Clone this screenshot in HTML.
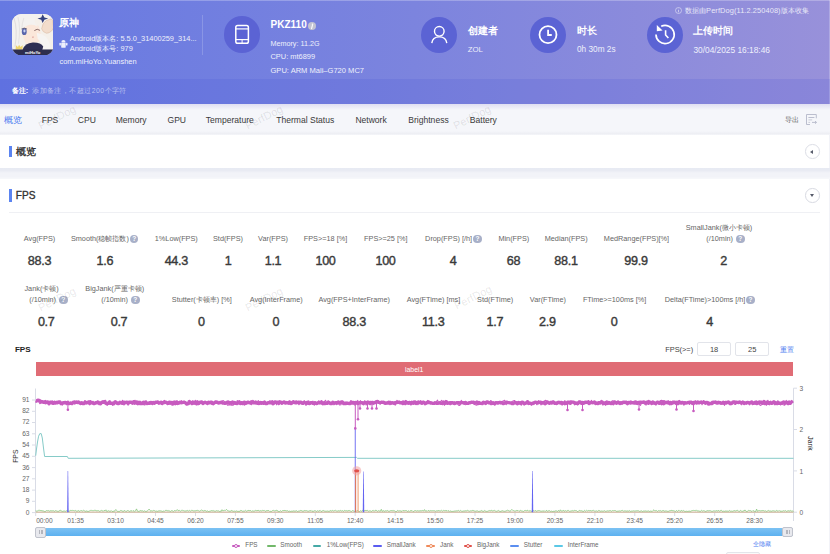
<!DOCTYPE html>
<html><head><meta charset="utf-8">
<style>
*{box-sizing:border-box;margin:0;padding:0}
html,body{width:830px;height:554px;overflow:hidden;background:#f2f3f8;font-family:"Liberation Sans",sans-serif;position:relative}
.abs{position:absolute}
#hdr{position:absolute;left:0;top:0;width:830px;height:104px;background:linear-gradient(90deg,#6679e2 0%,#7c84de 50%,#9891da 100%)}
#hdr .topline{position:absolute;left:0;top:0;width:830px;height:1px;background:rgba(255,255,255,0.25)}
#hdr .strip{position:absolute;left:0;top:78.5px;width:830px;height:25.5px;background:rgba(60,72,210,0.14)}
.w{color:#fff;position:absolute;white-space:nowrap}
.circ{position:absolute;width:36.2px;height:36.2px;border-radius:50%;background:#5b63d4}
.circ svg{position:absolute;left:0;top:0}
#tabs{position:absolute;left:0;top:104px;width:830px;height:30.7px;background:linear-gradient(180deg,#f5f6fa 0px,#f5f6fa 27px,#eeeff4 29.5px,#f3f4f8 30.7px)}
.tab{position:absolute;top:10.8px;font-size:8.55px;color:#3a3a3a;white-space:nowrap}
.tab.on{color:#4d7cf0}
.card{position:absolute;left:0;width:829px;background:#fff}
.bar{position:absolute;width:2.5px;background:#5b84f0}
.ml{position:absolute;width:160px;text-align:center;font-size:7.3px;color:#666;white-space:nowrap;line-height:9px}
.mv{position:absolute;width:100px;text-align:center;font-size:12.6px;color:#3a3a3a;-webkit-text-stroke:0.4px #3a3a3a;letter-spacing:-0.3px;white-space:nowrap;line-height:14px}
.q{display:inline-block;width:8.5px;height:8.5px;border-radius:50%;background:#a8b0c8;color:#fff;font-size:6.5px;line-height:8.5px;text-align:center;font-weight:bold;margin-left:1px;vertical-align:0px}
.ax{font-size:6.6px;fill:#666;font-family:"Liberation Sans",sans-serif}
.axt{font-size:6.8px;fill:#333;font-family:"Liberation Sans",sans-serif}
.axt2{font-size:6.8px;fill:#222;font-family:"Liberation Sans",sans-serif}
.lgi{position:absolute;top:544.5px;width:8.5px;height:2px;border-radius:1px}
.lgs{position:absolute;top:543.5px;width:4.2px;height:4.2px;border-radius:50%;border:1px solid;background:#fff;}
.lgt{position:absolute;top:541px;font-size:6.3px;color:#666;white-space:nowrap}
.wm{position:absolute;width:50px;height:12px;line-height:12px;text-align:center;font-size:11px;color:rgba(0,0,0,0.1);transform:rotate(-27deg);white-space:nowrap}
input{font-family:"Liberation Sans",sans-serif}
</style></head><body>
<div id="hdr">
  <div class="topline"></div>
  <div class="abs" style="left:829px;top:0;width:1px;height:104px;background:rgba(255,255,255,0.22)"></div>
  <div class="strip"></div>
  <!-- app icon -->
  <svg class="abs" style="left:11.6px;top:13.8px" width="41.5" height="41.5" viewBox="0 0 42 42">
    <defs><clipPath id="ic"><rect x="0" y="0" width="42" height="42" rx="9.5" ry="9.5"/></clipPath></defs>
    <g clip-path="url(#ic)">
      <rect width="42" height="42" fill="#f5f0ea"/>
      <path d="M0 0 H42 V6 Q30 2 20 4 Q10 8 8 18 Q7 28 9 36 H0Z" fill="#f3f1ef"/>
      <path d="M2 4 Q6 16 3 33" stroke="#d6d2d4" stroke-width="0.7" fill="none"/>
      <path d="M6 3 Q9 14 6.5 30" stroke="#dcd8d8" stroke-width="0.6" fill="none"/>
      <path d="M10 12 Q18 9 27 12 Q30 20 28.5 27 Q23 31 14 30 Q9.5 22 10 12Z" fill="#fbe7da"/>
      <path d="M9.5 13 Q14 3 24 4 Q21 8 26 13 Q20 9 15 12 Q12 13 9.5 17Z" fill="#f4f2f0"/>
      <path d="M12 4 Q10 10 10 15" stroke="#d8d4d4" stroke-width="0.5" fill="none"/>
      <ellipse cx="12.4" cy="17.9" rx="2.5" ry="3.4" fill="#5a66ac"/>
      <path d="M9.6 15.2 Q12.4 13.4 15.2 15.2" stroke="#3a3a5a" stroke-width="0.7" fill="none"/>
      <ellipse cx="12.6" cy="17.2" rx="1.1" ry="1.4" fill="#cdd5f2"/>
      <path d="M22.6 16.8 Q25.5 14.2 28.4 16.6" stroke="#6a4a4a" stroke-width="0.8" fill="none"/>
      <path d="M20.3 23.2 Q21.2 24.1 22.1 23.2" stroke="#c46a6a" stroke-width="0.6" fill="none"/>
      <path d="M30 15 Q30.5 9 35 6.5 L39.5 5 Q42 5.5 41.5 9 L42 14 Q40 19 35 19.5 Q31 18.5 30 15Z" fill="#f2dccb" stroke="#d6b49c" stroke-width="0.5"/>
      <path d="M31 0.2 L32.8 3.6 L36.6 4.6 L32.8 5.9 L31 9 L29.6 5.9 L25.8 4.6 L29.6 3.6 Z" fill="#34417e"/>
      <path d="M25 19 Q36 21 38.5 31 Q39 37 35 40 L29 40 Q33 31 26 25Z" fill="#f6f4f2"/>
      <path d="M10.8 36 Q13 29.5 21 28.8 Q29 28.5 31.6 33 L30.5 37 H10.8Z" fill="#2f2e52"/>
      <path d="M3.6 35.9 L4 31.5 L6 33.3 L7.2 31 L8.5 33.3 L10.8 31.5 L10.6 35.9Z" fill="#eed36a"/>
      <rect x="0" y="35.9" width="42" height="6.1" fill="#2d2d4e"/>
      <text x="21" y="40.6" text-anchor="middle" font-size="4.2" font-weight="bold" fill="#fff" font-family="Liberation Sans">miHoYo</text>
    </g>
  </svg>
  <div class="w" style="left:59.3px;top:15.5px;font-size:10.2px;font-weight:bold">原神</div>
  <svg class="abs" style="left:58.5px;top:38.5px" width="9" height="9" viewBox="0 0 9 9"><path d="M2.3 3.2 Q2.4 1 4.45 1 Q6.5 1 6.6 3.2 Z" fill="#eef0fc"/><rect x="2.2" y="3.5" width="4.5" height="5.3" rx="0.9" fill="#eef0fc"/><rect x="0.4" y="3.7" width="1.5" height="2.9" rx="0.7" fill="#eef0fc"/><rect x="7" y="3.7" width="1.5" height="2.9" rx="0.7" fill="#eef0fc"/></svg>
  <div class="w" style="left:69.8px;top:33.9px;font-size:7.42px;color:#eef0fb">Android版本名: 5.5.0_31400259_314...</div>
  <div class="w" style="left:69.8px;top:43.9px;font-size:7.42px;color:#eef0fb">Android版本号: 979</div>
  <div class="w" style="left:59.5px;top:56.5px;font-size:7.45px;color:#eef0fb">com.miHoYo.Yuanshen</div>
  <div class="abs" style="left:202px;top:14.5px;width:1px;height:40px;background:rgba(255,255,255,0.18)"></div>

  <div class="circ" style="left:223.8px;top:16.4px"><svg width="36.2" height="36.2" viewBox="0 0 36.2 36.2"><rect x="11.8" y="9.6" width="12.6" height="17.6" rx="1.8" fill="none" stroke="#fff" stroke-width="1.5"/><line x1="11.8" y1="12.9" x2="24.4" y2="12.9" stroke="#fff" stroke-width="1.2"/><line x1="11.8" y1="23.6" x2="24.4" y2="23.6" stroke="#fff" stroke-width="1.2"/><line x1="18.1" y1="23.6" x2="18.1" y2="27" stroke="#fff" stroke-width="1"/></svg></div>
  <div class="w" style="left:270.6px;top:19px;font-size:10px;font-weight:bold">PKZ110</div>
  <div class="abs" style="left:308.3px;top:21.6px;width:8.2px;height:8.2px;border-radius:50%;background:#c2c3d2"></div><svg class="abs" style="left:308.3px;top:21.6px" width="8.2" height="8.2" viewBox="0 0 8.2 8.2"><circle cx="4.5" cy="2.2" r="0.75" fill="#fff"/><path d="M4.4 3.4 L3.6 6.6" stroke="#fff" stroke-width="1.1" stroke-linecap="round"/></svg>
  <div class="w" style="left:270.5px;top:38.8px;font-size:7.2px;color:#eef0fb">Memory: 11.2G</div>
  <div class="w" style="left:270.5px;top:52.4px;font-size:7.45px;color:#eef0fb">CPU: mt6899</div>
  <div class="w" style="left:270.5px;top:66.3px;font-size:7.55px;color:#eef0fb">GPU: ARM Mali–G720 MC7</div>

  <div class="circ" style="left:421px;top:16.7px"><svg width="36.2" height="36.2" viewBox="0 0 36.2 36.2"><circle cx="18.3" cy="14.3" r="4.8" fill="none" stroke="#fff" stroke-width="1.4"/><path d="M10.8 26.2 Q11.5 19.9 18.3 19.9 Q25.1 19.9 25.8 26.2" fill="none" stroke="#fff" stroke-width="1.4"/></svg></div>
  <div class="w" style="left:467.7px;top:24px;font-size:10px;font-weight:bold">创建者</div>
  <div class="w" style="left:467.7px;top:45px;font-size:7.8px;color:#eef0fb">ZOL</div>

  <div class="circ" style="left:530.1px;top:16.7px"><svg width="36.2" height="36.2" viewBox="0 0 36.2 36.2"><circle cx="18" cy="17.7" r="8.5" fill="none" stroke="#fff" stroke-width="1.8"/><path d="M18.1 12.8 V18 H21.8" fill="none" stroke="#fff" stroke-width="1.8"/></svg></div>
  <div class="w" style="left:577px;top:24px;font-size:10px;font-weight:bold">时长</div>
  <div class="w" style="left:577px;top:44.6px;font-size:8.25px;color:#eef0fb">0h 30m 2s</div>

  <div class="circ" style="left:647px;top:16.7px"><svg width="36.2" height="36.2" viewBox="0 0 36.2 36.2"><path d="M9 17.5 A9.1 9.1 0 1 0 14.2 9.3" fill="none" stroke="#fff" stroke-width="1.7"/><path d="M9.8 8 L9.8 14.2 L15.6 13.6 Z" fill="#fff"/><path d="M18.6 13.2 V18 L21.4 21" fill="none" stroke="#fff" stroke-width="1.6"/></svg></div>
  <div class="w" style="left:693.4px;top:24px;font-size:10px;font-weight:bold">上传时间</div>
  <div class="w" style="left:693.4px;top:45px;font-size:8.35px;color:#eef0fb">30/04/2025 16:18:46</div>

  <svg class="abs" style="left:674.6px;top:7.2px" width="7" height="7" viewBox="0 0 7 7"><circle cx="3.5" cy="3.5" r="3" fill="none" stroke="#e4e4f6" stroke-width="0.6"/><line x1="3.5" y1="3" x2="3.5" y2="5.3" stroke="#e4e4f6" stroke-width="0.7"/><circle cx="3.5" cy="1.95" r="0.4" fill="#e4e4f6"/></svg>
  <div class="w" style="left:684.8px;top:5.8px;font-size:7.4px;letter-spacing:0.1px;color:#e8e8f8">数据由PerfDog(11.2.250408)版本收集</div>

  <div class="w" style="left:11.7px;top:86.2px;font-size:7.4px;font-weight:bold">备注:</div>
  <div class="w" style="left:32.1px;top:86.4px;font-size:6.9px;letter-spacing:0.45px;color:#b9c0ee">添加备注，不超过200个字符</div>
</div>

<div id="tabs">
<div class="tab on" style="left:4.3px">概览</div>
<div class="tab" style="left:41.7px">FPS</div>
<div class="tab" style="left:77.8px">CPU</div>
<div class="tab" style="left:115.7px">Memory</div>
<div class="tab" style="left:167.5px">GPU</div>
<div class="tab" style="left:205.8px">Temperature</div>
<div class="tab" style="left:276.3px">Thermal Status</div>
<div class="tab" style="left:355.4px">Network</div>
<div class="tab" style="left:408.3px">Brightness</div>
<div class="tab" style="left:469.8px">Battery</div>
  <div class="w" style="left:785.2px;top:11.2px;font-size:7px;color:#666">导出</div>
  <svg class="abs" style="left:805.5px;top:10px" width="12" height="12" viewBox="0 0 12 12"><path d="M10.3 4.3 V0.5 H0.5 V10.5 H4" fill="none" stroke="#b4b8c8" stroke-width="0.9"/><line x1="2.4" y1="3.5" x2="8.4" y2="3.5" stroke="#b4b8c8" stroke-width="0.9"/><line x1="2.4" y1="5.9" x2="6.2" y2="5.9" stroke="#c4c7d4" stroke-width="0.9"/><line x1="2.4" y1="8.4" x2="4.1" y2="8.4" stroke="#c4c7d4" stroke-width="0.9"/><path d="M6 8.4 H10.4 M9 7.1 L10.5 8.4 L9 9.7" fill="none" stroke="#b4b8c8" stroke-width="0.9"/></svg>
</div>
<div class="abs" style="left:0;top:104px;width:830px;height:6px;background:linear-gradient(180deg,rgba(110,100,200,0.16),rgba(110,100,200,0))"></div>

<div class="card" style="top:134.7px;height:33.3px">
  <div class="bar" style="left:9.3px;top:11px;height:11.8px"></div>
  <div class="abs" style="left:15.7px;top:10.3px;font-size:10.3px;color:#333;-webkit-text-stroke:0.35px #333">概览</div>
  <div class="abs" style="left:805px;top:9.7px;width:14.6px;height:14.6px;border-radius:50%;border:1px solid #dcdee6;background:#fff"></div>
  <div class="abs" style="left:810.4px;top:15px;width:0;height:0;border-top:2.2px solid transparent;border-bottom:2.2px solid transparent;border-right:3px solid #575b6a"></div>
</div>

<div class="abs" style="left:0;top:168px;width:830px;height:10.5px;background:linear-gradient(180deg,#e7eaf3 0px,#e9ebf3 2.5px,#f2f3f8 5px,#f2f3f8 8.5px,#f6f7fa 10.5px)"></div>
<div class="card" style="top:178.5px;height:376px">
  <div class="bar" style="left:9.3px;top:10.5px;height:12.5px"></div>
  <div class="abs" style="left:15.8px;top:11.9px;font-size:10.1px;color:#333;-webkit-text-stroke:0.35px #333">FPS</div>
  <div class="abs" style="left:805px;top:9.6px;width:14.6px;height:14.6px;border-radius:50%;border:1px solid #d8dae2;background:#fff"></div>
  <div class="abs" style="left:809.8px;top:15.3px;width:0;height:0;border-left:2.5px solid transparent;border-right:2.5px solid transparent;border-top:3.2px solid #575b6a"></div>
  <div class="abs" style="left:9.4px;top:33.2px;width:810.3px;height:1px;background:#eff0f4"></div>
</div>

<div class="ml" style="left:-40.5px;top:233.7px">Avg(FPS)</div>
<div class="mv" style="left:-10.5px;top:253.8px">88.3</div>
<div class="ml" style="left:24.7px;top:233.7px">Smooth(稳帧指数)<span class="q">?</span></div>
<div class="mv" style="left:54.8px;top:253.8px">1.6</div>
<div class="ml" style="left:96.3px;top:233.7px">1%Low(FPS)</div>
<div class="mv" style="left:126.3px;top:253.8px">44.3</div>
<div class="ml" style="left:148.0px;top:233.7px">Std(FPS)</div>
<div class="mv" style="left:178.0px;top:253.8px">1</div>
<div class="ml" style="left:193.0px;top:233.7px">Var(FPS)</div>
<div class="mv" style="left:223.0px;top:253.8px">1.1</div>
<div class="ml" style="left:245.5px;top:233.7px">FPS&gt;=18 [%]</div>
<div class="mv" style="left:275.5px;top:253.8px">100</div>
<div class="ml" style="left:305.8px;top:233.7px">FPS&gt;=25 [%]</div>
<div class="mv" style="left:335.5px;top:253.8px">100</div>
<div class="ml" style="left:373.4px;top:233.7px">Drop(FPS) [/h]<span class="q">?</span></div>
<div class="mv" style="left:403.1px;top:253.8px">4</div>
<div class="ml" style="left:433.8px;top:233.7px">Min(FPS)</div>
<div class="mv" style="left:463.5px;top:253.8px">68</div>
<div class="ml" style="left:486.2px;top:233.7px">Median(FPS)</div>
<div class="mv" style="left:516.0px;top:253.8px">88.1</div>
<div class="ml" style="left:556.5px;top:233.7px">MedRange(FPS)[%]</div>
<div class="mv" style="left:586.0px;top:253.8px">99.9</div>
<div class="ml" style="left:121.8px;top:294.5px">Stutter(卡顿率) [%]</div>
<div class="mv" style="left:151.4px;top:314.5px">0</div>
<div class="ml" style="left:196.2px;top:294.5px">Avg(InterFrame)</div>
<div class="mv" style="left:225.9px;top:314.5px">0</div>
<div class="ml" style="left:274.2px;top:294.5px">Avg(FPS+InterFrame)</div>
<div class="mv" style="left:304.2px;top:314.5px">88.3</div>
<div class="ml" style="left:353.5px;top:294.5px">Avg(FTime) [ms]</div>
<div class="mv" style="left:383.2px;top:314.5px">11.3</div>
<div class="ml" style="left:415.2px;top:294.5px">Std(FTime)</div>
<div class="mv" style="left:444.8px;top:314.5px">1.7</div>
<div class="ml" style="left:467.9px;top:294.5px">Var(FTime)</div>
<div class="mv" style="left:497.4px;top:314.5px">2.9</div>
<div class="ml" style="left:534.6px;top:294.5px">FTime&gt;=100ms [%]</div>
<div class="mv" style="left:564.2px;top:314.5px">0</div>
<div class="ml" style="left:629.8px;top:294.5px">Delta(FTime)&gt;100ms [/h]<span class="q">?</span></div>
<div class="mv" style="left:659.5px;top:314.5px">4</div>
<div class="ml" style="left:639.0px;top:223.4px">SmallJank(微小卡顿)</div>
<div class="ml" style="left:645.4px;top:233.9px">(/10min)&nbsp;<span class="q">?</span></div>
<div class="mv" style="left:673.6px;top:253.8px">2</div>
<div class="ml" style="left:-38.4px;top:284px">Jank(卡顿)</div>
<div class="ml" style="left:-31.6px;top:294.5px">(/10min)&nbsp;<span class="q">?</span></div>
<div class="mv" style="left:-3.8px;top:314.5px">0.7</div>
<div class="ml" style="left:34.7px;top:284px">BigJank(严重卡顿)</div>
<div class="ml" style="left:40.4px;top:294.5px">(/10min)&nbsp;<span class="q">?</span></div>
<div class="mv" style="left:69.0px;top:314.5px">0.7</div>

<div class="abs" style="left:14.9px;top:345px;font-size:8.1px;font-weight:bold;color:#222">FPS</div>
<div class="abs" style="left:665.2px;top:344.6px;font-size:7.4px;color:#444">FPS(&gt;=)</div>
<div class="abs" style="left:697.3px;top:342.2px;width:33.6px;height:13.4px;border:1px solid #e2e4ea;border-radius:2px;background:#fff;font-size:7.5px;color:#444;text-align:center;line-height:13.4px">18</div>
<div class="abs" style="left:735.2px;top:342.2px;width:34.1px;height:13.4px;border:1px solid #e2e4ea;border-radius:2px;background:#fff;font-size:7.5px;color:#444;text-align:center;line-height:13.4px">25</div>
<div class="abs" style="left:779.7px;top:344.8px;font-size:7.2px;color:#4d7cf0">重置</div>

<div class="abs" style="left:35.7px;top:362px;width:757.8px;height:14.3px;background:#e06c75"></div>
<div class="abs" style="left:405px;top:365.7px;font-size:6.9px;color:#fff">label1</div>

<svg class="abs" style="left:0;top:0" width="830" height="554" viewBox="0 0 830 554">
<line x1="35.5" y1="388.5" x2="35.5" y2="512.5" stroke="#d9dce6" stroke-width="1"/>
<line x1="793.5" y1="388.2" x2="793.5" y2="521" stroke="#d9dce6" stroke-width="1"/>
<line x1="35.5" y1="512.5" x2="793.5" y2="512.5" stroke="#d9dce6" stroke-width="1"/>
<line x1="32" y1="512.6" x2="35.5" y2="512.6" stroke="#d9dce6" stroke-width="1"/>
<text x="29.5" y="514.5" text-anchor="end" class="ax">0</text>
<line x1="32" y1="501.3" x2="35.5" y2="501.3" stroke="#d9dce6" stroke-width="1"/>
<text x="29.5" y="503.2" text-anchor="end" class="ax">9</text>
<line x1="32" y1="490.1" x2="35.5" y2="490.1" stroke="#d9dce6" stroke-width="1"/>
<text x="29.5" y="492.0" text-anchor="end" class="ax">18</text>
<line x1="32" y1="478.8" x2="35.5" y2="478.8" stroke="#d9dce6" stroke-width="1"/>
<text x="29.5" y="480.7" text-anchor="end" class="ax">27</text>
<line x1="32" y1="467.6" x2="35.5" y2="467.6" stroke="#d9dce6" stroke-width="1"/>
<text x="29.5" y="469.5" text-anchor="end" class="ax">36</text>
<line x1="32" y1="456.3" x2="35.5" y2="456.3" stroke="#d9dce6" stroke-width="1"/>
<text x="29.5" y="458.2" text-anchor="end" class="ax">45</text>
<line x1="32" y1="445.0" x2="35.5" y2="445.0" stroke="#d9dce6" stroke-width="1"/>
<text x="29.5" y="446.9" text-anchor="end" class="ax">54</text>
<line x1="32" y1="433.8" x2="35.5" y2="433.8" stroke="#d9dce6" stroke-width="1"/>
<text x="29.5" y="435.7" text-anchor="end" class="ax">63</text>
<line x1="32" y1="422.5" x2="35.5" y2="422.5" stroke="#d9dce6" stroke-width="1"/>
<text x="29.5" y="424.4" text-anchor="end" class="ax">72</text>
<line x1="32" y1="411.3" x2="35.5" y2="411.3" stroke="#d9dce6" stroke-width="1"/>
<text x="29.5" y="413.2" text-anchor="end" class="ax">82</text>
<line x1="32" y1="400.0" x2="35.5" y2="400.0" stroke="#d9dce6" stroke-width="1"/>
<text x="29.5" y="401.9" text-anchor="end" class="ax">91</text>
<line x1="793.5" y1="512.2" x2="797" y2="512.2" stroke="#d9dce6" stroke-width="1"/>
<text x="799.5" y="514.8" class="ax">0</text>
<line x1="793.5" y1="470.9" x2="797" y2="470.9" stroke="#d9dce6" stroke-width="1"/>
<text x="799.5" y="473.5" class="ax">1</text>
<line x1="793.5" y1="429.5" x2="797" y2="429.5" stroke="#d9dce6" stroke-width="1"/>
<text x="799.5" y="432.1" class="ax">2</text>
<line x1="793.5" y1="388.2" x2="797" y2="388.2" stroke="#d9dce6" stroke-width="1"/>
<text x="799.5" y="390.8" class="ax">3</text>
<line x1="35.7" y1="512.5" x2="35.7" y2="516" stroke="#d9dce6" stroke-width="1"/>
<text x="36.2" y="523.1" class="ax">00:00</text>
<line x1="75.6" y1="512.5" x2="75.6" y2="516" stroke="#d9dce6" stroke-width="1"/>
<text x="75.6" y="523.1" text-anchor="middle" class="ax">01:35</text>
<line x1="115.6" y1="512.5" x2="115.6" y2="516" stroke="#d9dce6" stroke-width="1"/>
<text x="115.6" y="523.1" text-anchor="middle" class="ax">03:10</text>
<line x1="155.5" y1="512.5" x2="155.5" y2="516" stroke="#d9dce6" stroke-width="1"/>
<text x="155.5" y="523.1" text-anchor="middle" class="ax">04:45</text>
<line x1="195.5" y1="512.5" x2="195.5" y2="516" stroke="#d9dce6" stroke-width="1"/>
<text x="195.5" y="523.1" text-anchor="middle" class="ax">06:20</text>
<line x1="235.4" y1="512.5" x2="235.4" y2="516" stroke="#d9dce6" stroke-width="1"/>
<text x="235.4" y="523.1" text-anchor="middle" class="ax">07:55</text>
<line x1="275.3" y1="512.5" x2="275.3" y2="516" stroke="#d9dce6" stroke-width="1"/>
<text x="275.3" y="523.1" text-anchor="middle" class="ax">09:30</text>
<line x1="315.3" y1="512.5" x2="315.3" y2="516" stroke="#d9dce6" stroke-width="1"/>
<text x="315.3" y="523.1" text-anchor="middle" class="ax">11:05</text>
<line x1="355.2" y1="512.5" x2="355.2" y2="516" stroke="#d9dce6" stroke-width="1"/>
<text x="355.2" y="523.1" text-anchor="middle" class="ax">12:40</text>
<line x1="395.2" y1="512.5" x2="395.2" y2="516" stroke="#d9dce6" stroke-width="1"/>
<text x="395.2" y="523.1" text-anchor="middle" class="ax">14:15</text>
<line x1="435.1" y1="512.5" x2="435.1" y2="516" stroke="#d9dce6" stroke-width="1"/>
<text x="435.1" y="523.1" text-anchor="middle" class="ax">15:50</text>
<line x1="475.0" y1="512.5" x2="475.0" y2="516" stroke="#d9dce6" stroke-width="1"/>
<text x="475.0" y="523.1" text-anchor="middle" class="ax">17:25</text>
<line x1="515.0" y1="512.5" x2="515.0" y2="516" stroke="#d9dce6" stroke-width="1"/>
<text x="515.0" y="523.1" text-anchor="middle" class="ax">19:00</text>
<line x1="554.9" y1="512.5" x2="554.9" y2="516" stroke="#d9dce6" stroke-width="1"/>
<text x="554.9" y="523.1" text-anchor="middle" class="ax">20:35</text>
<line x1="594.9" y1="512.5" x2="594.9" y2="516" stroke="#d9dce6" stroke-width="1"/>
<text x="594.9" y="523.1" text-anchor="middle" class="ax">22:10</text>
<line x1="634.8" y1="512.5" x2="634.8" y2="516" stroke="#d9dce6" stroke-width="1"/>
<text x="634.8" y="523.1" text-anchor="middle" class="ax">23:45</text>
<line x1="674.7" y1="512.5" x2="674.7" y2="516" stroke="#d9dce6" stroke-width="1"/>
<text x="674.7" y="523.1" text-anchor="middle" class="ax">25:20</text>
<line x1="714.7" y1="512.5" x2="714.7" y2="516" stroke="#d9dce6" stroke-width="1"/>
<text x="714.7" y="523.1" text-anchor="middle" class="ax">26:55</text>
<line x1="754.6" y1="512.5" x2="754.6" y2="516" stroke="#d9dce6" stroke-width="1"/>
<text x="754.6" y="523.1" text-anchor="middle" class="ax">28:30</text>
<text transform="translate(17.6,456.2) rotate(-90)" text-anchor="middle" class="axt">FPS</text>
<text transform="translate(808,443.5) rotate(90)" text-anchor="middle" class="axt2">Jank</text>
<line x1="35.7" y1="512.1" x2="793.5" y2="512.1" stroke="#d8bea2" stroke-width="1.1"/>
<polyline points="35.7,510.7 36.6,511.1 37.5,510.9 38.4,510.4 39.3,510.3 40.2,510.4 41.1,510.8 42.0,510.4 42.9,511.1 43.8,511.0 44.7,511.5 45.6,511.3 46.5,510.5 47.4,510.7 48.3,510.5 49.2,511.1 50.1,511.0 51.0,510.4 51.9,511.1 52.8,510.7 53.7,510.8 54.6,511.3 55.5,510.6 56.4,510.9 57.3,511.2 58.2,511.5 59.1,510.8 60.0,510.5 60.9,510.3 61.8,511.2 62.7,511.4 63.6,511.1 64.5,511.0 65.4,511.3 66.3,510.9 67.2,510.4 68.1,511.1 69.0,511.3 69.9,510.8 70.8,510.3 71.7,510.5 72.6,510.4 73.5,510.5 74.4,510.8 75.3,510.4 76.2,511.0 77.1,511.3 78.0,510.6 78.9,510.7 79.8,511.4 80.7,510.5 81.6,510.6 82.5,511.0 83.4,510.3 84.3,510.7 85.2,511.4 86.1,510.9 87.0,511.1 87.9,511.4 88.8,511.3 89.7,510.8 90.6,510.4 91.5,510.4 92.4,510.6 93.3,510.7 94.2,510.3 95.1,510.4 96.0,510.3 96.9,511.0 97.8,510.6 98.7,510.7 99.6,511.3 100.5,510.9 101.4,510.4 102.3,510.7 103.2,511.3 104.1,510.3 105.0,510.9 105.9,509.8 106.8,511.5 107.7,511.1 108.6,510.7 109.5,511.2 110.4,511.2 111.3,510.6 112.2,511.5 113.1,511.3 114.0,511.2 114.9,510.9 115.8,509.5 116.7,510.6 117.6,511.4 118.5,511.4 119.4,511.4 120.3,510.6 121.2,510.5 122.1,511.0 123.0,511.3 123.9,511.1 124.8,510.4 125.7,511.4 126.6,511.2 127.5,510.5 128.4,510.7 129.3,511.5 130.2,510.8 131.1,511.2 132.0,510.5 132.9,511.4 133.8,510.5 134.7,511.5 135.6,510.7 136.5,508.9 137.4,511.1 138.3,511.4 139.2,511.3 140.1,510.6 141.0,510.7 141.9,511.0 142.8,510.8 143.7,511.4 144.6,510.8 145.5,511.4 146.4,511.4 147.3,510.9 148.2,510.3 149.1,509.1 150.0,510.5 150.9,511.2 151.8,510.7 152.7,511.0 153.6,510.4 154.5,510.6 155.4,511.2 156.3,511.0 157.2,511.4 158.1,511.0 159.0,510.9 159.9,510.8 160.8,510.9 161.7,511.1 162.6,511.4 163.5,511.0 164.4,511.3 165.3,510.4 166.2,510.4 167.1,510.4 168.0,511.2 168.9,510.5 169.8,511.1 170.7,511.4 171.6,510.6 172.5,510.8 173.4,511.5 174.3,510.5 175.2,510.9 176.1,510.5 177.0,510.0 177.9,509.9 178.8,511.0 179.7,510.4 180.6,511.2 181.5,510.4 182.4,510.3 183.3,510.6 184.2,510.8 185.1,511.3 186.0,510.5 186.9,511.0 187.8,510.4 188.7,511.1 189.6,510.4 190.5,511.1 191.4,510.4 192.3,510.4 193.2,510.8 194.1,511.0 195.0,510.6 195.9,510.9 196.8,510.4 197.7,510.4 198.6,510.7 199.5,511.2 200.4,510.9 201.3,509.9 202.2,510.3 203.1,511.0 204.0,510.9 204.9,510.4 205.8,510.8 206.7,511.3 207.6,510.9 208.5,511.5 209.4,511.3 210.3,511.1 211.2,510.7 212.1,510.5 213.0,511.2 213.9,510.5 214.8,511.3 215.7,511.1 216.6,510.6 217.5,510.9 218.4,510.8 219.3,511.5 220.2,511.0 221.1,511.5 222.0,509.7 222.9,510.9 223.8,510.5 224.7,510.3 225.6,510.4 226.5,509.4 227.4,510.6 228.3,510.9 229.2,511.1 230.1,511.4 231.0,510.7 231.9,510.5 232.8,511.1 233.7,511.3 234.6,511.1 235.5,511.3 236.4,510.9 237.3,511.3 238.2,511.3 239.1,511.4 240.0,511.1 240.9,510.3 241.8,510.7 242.7,511.3 243.6,511.1 244.5,511.1 245.4,510.3 246.3,511.2 247.2,510.9 248.1,510.4 249.0,510.6 249.9,510.6 250.8,510.5 251.7,511.5 252.6,510.8 253.5,511.1 254.4,511.0 255.3,510.4 256.2,510.6 257.1,510.7 258.0,510.3 258.9,510.6 259.8,511.1 260.7,510.6 261.6,510.9 262.5,510.4 263.4,510.5 264.3,510.4 265.2,511.3 266.1,510.8 267.0,510.6 267.9,510.6 268.8,510.5 269.7,511.4 270.6,511.3 271.5,511.4 272.4,510.6 273.3,510.3 274.2,510.9 275.1,510.7 276.0,510.7 276.9,510.0 277.8,511.3 278.7,511.4 279.6,511.4 280.5,510.7 281.4,511.5 282.3,510.7 283.2,510.6 284.1,510.4 285.0,510.6 285.9,510.6 286.8,510.9 287.7,510.7 288.6,511.4 289.5,511.1 290.4,511.4 291.3,511.2 292.2,511.2 293.1,511.2 294.0,510.6 294.9,511.4 295.8,510.9 296.7,510.7 297.6,511.5 298.5,511.1 299.4,511.0 300.3,510.5 301.2,510.5 302.1,510.9 303.0,511.4 303.9,510.8 304.8,510.5 305.7,510.7 306.6,510.6 307.5,511.0 308.4,511.2 309.3,510.8 310.2,510.8 311.1,510.4 312.0,511.5 312.9,510.9 313.8,511.3 314.7,510.6 315.6,510.8 316.5,511.4 317.4,510.7 318.3,511.2 319.2,510.9 320.1,510.3 321.0,511.4 321.9,511.3 322.8,510.6 323.7,510.5 324.6,511.1 325.5,511.2 326.4,511.2 327.3,511.0 328.2,511.2 329.1,511.4 330.0,510.7 330.9,510.6 331.8,511.1 332.7,510.4 333.6,511.0 334.5,510.6 335.4,510.3 336.3,510.9 337.2,511.1 338.1,510.9 339.0,510.6 339.9,511.1 340.8,510.3 341.7,511.1 342.6,510.6 343.5,511.4 344.4,510.3 345.3,510.8 346.2,510.5 347.1,511.2 348.0,510.5 348.9,510.7 349.8,510.6 350.7,511.2 351.6,511.4 352.5,510.5 353.4,510.8 354.3,511.4 355.2,510.8 356.1,511.5 357.0,510.4 357.9,510.8 358.8,511.4 359.7,511.5 360.6,510.7 361.5,511.4 362.4,510.3 363.3,510.8 364.2,510.7 365.1,510.3 366.0,510.7 366.9,510.4 367.8,510.5 368.7,511.3 369.6,510.8 370.5,510.9 371.4,511.4 372.3,510.7 373.2,510.3 374.1,511.3 375.0,510.3 375.9,510.4 376.8,510.6 377.7,511.4 378.6,510.6 379.5,511.0 380.4,511.2 381.3,509.3 382.2,511.4 383.1,510.6 384.0,510.9 384.9,511.4 385.8,510.6 386.7,510.9 387.6,510.5 388.5,511.2 389.4,511.2 390.3,510.7 391.2,510.7 392.1,510.4 393.0,511.2 393.9,510.4 394.8,511.0 395.7,511.5 396.6,511.5 397.5,510.4 398.4,510.9 399.3,510.8 400.2,510.8 401.1,511.1 402.0,511.3 402.9,510.4 403.8,510.7 404.7,510.7 405.6,510.5 406.5,510.6 407.4,511.4 408.3,510.7 409.2,511.5 410.1,510.6 411.0,511.1 411.9,510.4 412.8,511.3 413.7,511.4 414.6,510.7 415.5,510.5 416.4,511.0 417.3,510.7 418.2,510.8 419.1,511.2 420.0,510.4 420.9,511.0 421.8,510.7 422.7,510.5 423.6,511.0 424.5,509.6 425.4,511.1 426.3,510.7 427.2,511.3 428.1,510.4 429.0,510.8 429.9,511.1 430.8,510.5 431.7,510.8 432.6,510.7 433.5,510.7 434.4,510.7 435.3,511.3 436.2,510.7 437.1,511.2 438.0,510.3 438.9,510.8 439.8,510.8 440.7,510.9 441.6,510.3 442.5,511.1 443.4,510.4 444.3,510.7 445.2,510.5 446.1,510.9 447.0,510.4 447.9,511.3 448.8,510.5 449.7,511.4 450.6,510.9 451.5,511.4 452.4,511.4 453.3,511.3 454.2,511.2 455.1,510.8 456.0,511.3 456.9,510.6 457.8,510.9 458.7,510.4 459.6,511.2 460.5,510.3 461.4,511.2 462.3,511.3 463.2,511.0 464.1,511.1 465.0,510.8 465.9,510.8 466.8,510.8 467.7,510.3 468.6,510.9 469.5,511.2 470.4,510.8 471.3,510.9 472.2,510.5 473.1,510.4 474.0,510.9 474.9,511.1 475.8,511.2 476.7,510.9 477.6,510.9 478.5,511.4 479.4,511.3 480.3,511.2 481.2,510.5 482.1,510.9 483.0,511.4 483.9,511.2 484.8,510.4 485.7,511.2 486.6,511.4 487.5,511.3 488.4,510.9 489.3,510.5 490.2,510.9 491.1,510.3 492.0,510.5 492.9,511.1 493.8,510.5 494.7,510.4 495.6,511.1 496.5,511.3 497.4,511.0 498.3,510.4 499.2,511.1 500.1,511.3 501.0,511.5 501.9,510.7 502.8,510.8 503.7,511.2 504.6,511.3 505.5,511.1 506.4,511.0 507.3,510.0 508.2,510.5 509.1,510.8 510.0,511.4 510.9,510.6 511.8,509.4 512.7,510.4 513.6,510.6 514.5,511.0 515.4,511.0 516.3,510.5 517.2,510.6 518.1,510.4 519.0,511.3 519.9,510.8 520.8,510.3 521.7,511.0 522.6,511.1 523.5,511.4 524.4,510.6 525.3,510.4 526.2,510.8 527.1,510.4 528.0,510.3 528.9,511.4 529.8,510.5 530.7,510.9 531.6,511.3 532.5,510.7 533.4,510.4 534.3,511.2 535.2,510.3 536.1,511.2 537.0,511.2 537.9,510.6 538.8,510.6 539.7,510.7 540.6,511.1 541.5,511.2 542.4,511.0 543.3,511.2 544.2,510.6 545.1,511.5 546.0,510.5 546.9,510.6 547.8,511.4 548.7,510.7 549.6,510.7 550.5,511.4 551.4,511.1 552.3,511.5 553.2,511.3 554.1,511.3 555.0,511.2 555.9,510.7 556.8,511.0 557.7,511.4 558.6,510.3 559.5,511.4 560.4,509.8 561.3,511.1 562.2,511.1 563.1,510.4 564.0,510.7 564.9,511.3 565.8,510.4 566.7,511.4 567.6,510.4 568.5,510.4 569.4,511.3 570.3,511.1 571.2,511.1 572.1,510.4 573.0,511.2 573.9,510.7 574.8,510.3 575.7,510.6 576.6,510.7 577.5,511.5 578.4,511.3 579.3,510.3 580.2,510.8 581.1,510.7 582.0,510.9 582.9,511.3 583.8,511.3 584.7,510.3 585.6,511.2 586.5,510.3 587.4,510.9 588.3,510.5 589.2,510.7 590.1,510.6 591.0,510.6 591.9,511.1 592.8,510.4 593.7,510.4 594.6,511.1 595.5,511.1 596.4,510.8 597.3,511.4 598.2,510.6 599.1,510.6 600.0,510.9 600.9,511.4 601.8,510.9 602.7,511.2 603.6,511.1 604.5,510.7 605.4,511.3 606.3,511.2 607.2,510.8 608.1,511.0 609.0,510.9 609.9,510.6 610.8,510.7 611.7,511.3 612.6,510.5 613.5,510.7 614.4,510.5 615.3,510.5 616.2,511.2 617.1,511.5 618.0,510.8 618.9,511.3 619.8,510.8 620.7,511.1 621.6,510.5 622.5,510.3 623.4,511.2 624.3,510.9 625.2,510.9 626.1,511.0 627.0,511.2 627.9,510.8 628.8,511.2 629.7,510.6 630.6,511.4 631.5,511.1 632.4,511.1 633.3,510.8 634.2,511.1 635.1,510.8 636.0,511.2 636.9,510.6 637.8,510.8 638.7,510.8 639.6,511.4 640.5,511.1 641.4,510.8 642.3,511.5 643.2,511.0 644.1,511.2 645.0,510.9 645.9,511.0 646.8,511.2 647.7,511.1 648.6,510.9 649.5,511.4 650.4,511.1 651.3,511.2 652.2,511.5 653.1,510.4 654.0,509.8 654.9,510.8 655.8,510.7 656.7,510.6 657.6,511.4 658.5,510.6 659.4,510.8 660.3,510.5 661.2,511.3 662.1,510.9 663.0,510.6 663.9,510.7 664.8,511.3 665.7,510.9 666.6,511.0 667.5,511.3 668.4,511.3 669.3,510.8 670.2,510.8 671.1,510.3 672.0,510.6 672.9,510.7 673.8,510.8 674.7,511.1 675.6,511.4 676.5,510.4 677.4,511.4 678.3,510.5 679.2,510.4 680.1,511.4 681.0,510.6 681.9,510.5 682.8,511.2 683.7,510.5 684.6,511.3 685.5,511.4 686.4,511.2 687.3,511.4 688.2,511.3 689.1,511.1 690.0,511.2 690.9,511.4 691.8,510.6 692.7,510.5 693.6,510.4 694.5,510.5 695.4,510.9 696.3,509.9 697.2,510.9 698.1,511.1 699.0,510.7 699.9,511.5 700.8,511.1 701.7,510.3 702.6,511.1 703.5,510.7 704.4,510.9 705.3,511.4 706.2,511.2 707.1,510.7 708.0,510.7 708.9,510.9 709.8,510.6 710.7,510.8 711.6,511.3 712.5,511.3 713.4,510.9 714.3,510.9 715.2,511.1 716.1,510.7 717.0,510.7 717.9,511.1 718.8,510.3 719.7,511.4 720.6,510.4 721.5,510.3 722.4,511.4 723.3,511.1 724.2,511.4 725.1,511.0 726.0,511.1 726.9,511.1 727.8,511.1 728.7,511.2 729.6,510.5 730.5,511.2 731.4,511.1 732.3,511.3 733.2,511.0 734.1,510.7 735.0,510.7 735.9,511.1 736.8,510.4 737.7,510.3 738.6,511.3 739.5,511.4 740.4,510.3 741.3,511.0 742.2,511.5 743.1,510.8 744.0,511.1 744.9,509.9 745.8,511.1 746.7,511.5 747.6,511.3 748.5,510.3 749.4,510.6 750.3,510.5 751.2,511.2 752.1,511.3 753.0,510.4 753.9,511.2 754.8,511.4 755.7,511.5 756.6,509.1 757.5,511.3 758.4,510.7 759.3,510.5 760.2,510.9 761.1,510.7 762.0,510.8 762.9,510.5 763.8,510.7 764.7,511.1 765.6,510.8 766.5,511.4 767.4,511.0 768.3,510.4 769.2,511.1 770.1,510.7 771.0,511.5 771.9,511.0 772.8,510.8 773.7,510.8 774.6,511.0 775.5,511.3 776.4,510.3 777.3,510.8 778.2,511.3 779.1,510.4 780.0,511.3 780.9,511.0 781.8,511.3 782.7,511.1 783.6,510.7 784.5,511.0 785.4,510.5 786.3,511.4 787.2,511.0 788.1,510.9 789.0,510.6 789.9,511.2 790.8,510.4 791.7,511.2 792.6,511.0 793.5,511.4" fill="none" stroke="#86c77c" stroke-width="0.8"/>
<polyline points="35.7,455.7 36.5,449.0 37.5,442.0 38.6,436.2 39.8,433.6 41.2,433.6 42.3,438.0 43.5,448.0 44.6,456.5 67.4,456.5 68.2,458.3 356.5,457.4 357.5,458.3 793.5,458.3" fill="none" stroke="#86cbc8" stroke-width="1"/>
<polygon points="67.15,512.2 67.65,470.9 68.15,470.9 68.65,512.2" fill="#6464f2"/>
<polygon points="362.75,512.2 363.25,471.4 363.75,471.4 364.25,512.2" fill="#6464f2"/>
<polygon points="531.75,512.2 532.25,470.9 532.75,470.9 533.25,512.2" fill="#6464f2"/>
<line x1="355.25" y1="428" x2="355.25" y2="512.2" stroke="#6464f2" stroke-width="0.9"/>
<line x1="355.6" y1="471" x2="355.6" y2="512.2" stroke="#e0785c" stroke-width="1.1"/>
<line x1="358.1" y1="471" x2="358.1" y2="512.2" stroke="#f2a47a" stroke-width="1.1"/>
<polyline points="35.7,400.8 36.8,401.0 37.9,400.2 39.0,400.5 40.1,400.8 41.2,402.0 42.3,401.6 43.4,402.3 44.5,402.2 45.6,402.7 46.7,402.2 47.8,402.0 48.9,403.7 50.0,402.6 51.1,402.1 52.2,403.0 53.3,403.3 54.4,402.2 55.5,403.0 56.6,402.5 57.7,402.8 58.8,401.9 59.9,402.0 61.0,403.7 62.1,403.5 63.2,402.8 64.3,402.9 65.4,402.4 66.5,403.3 67.6,402.7 68.7,403.6 69.8,403.3 70.9,403.4 72.0,403.6 73.1,402.4 74.2,402.0 75.3,402.3 76.4,402.2 77.5,402.1 78.6,402.0 79.7,402.9 80.8,403.5 81.9,402.7 83.0,403.6 84.1,403.5 85.2,402.0 86.3,403.0 87.4,402.6 88.5,402.1 89.6,403.6 90.7,402.4 91.8,402.9 92.9,403.1 94.0,403.6 95.1,403.1 96.2,402.6 97.3,402.7 98.4,402.2 99.5,403.6 100.6,403.7 101.7,402.3 102.8,402.0 103.9,402.4 105.0,402.5 106.1,403.5 107.2,403.5 108.3,403.4 109.4,402.0 110.5,403.3 111.6,403.2 112.7,403.1 113.8,403.7 114.9,402.0 116.0,402.2 117.1,403.3 118.2,403.6 119.3,403.1 120.4,402.4 121.5,403.0 122.6,403.3 123.7,402.1 124.8,402.5 125.9,402.4 127.0,402.1 128.1,402.8 129.2,402.2 130.3,402.3 131.4,402.2 132.5,403.1 133.6,401.9 134.7,403.2 135.8,402.3 136.9,402.0 138.0,403.6 139.1,402.3 140.2,403.6 141.3,403.5 142.4,403.5 143.5,402.2 144.6,402.7 145.7,402.1 146.8,403.6 147.9,403.4 149.0,403.0 150.1,402.7 151.2,402.5 152.3,403.4 153.4,402.8 154.5,403.0 155.6,402.2 156.7,402.3 157.8,402.0 158.9,403.2 160.0,402.9 161.1,402.2 162.2,403.5 163.3,402.4 164.4,402.6 165.5,402.2 166.6,402.4 167.7,403.4 168.8,402.5 169.9,402.2 171.0,402.8 172.1,402.5 173.2,403.5 174.3,402.1 175.4,403.7 176.5,402.0 177.6,403.5 178.7,403.1 179.8,402.3 180.9,402.8 182.0,402.4 183.1,402.4 184.2,402.3 185.3,402.6 186.4,403.7 187.5,403.7 188.6,403.6 189.7,402.1 190.8,402.4 191.9,403.5 193.0,402.0 194.1,403.2 195.2,402.4 196.3,403.7 197.4,401.9 198.5,403.4 199.6,402.5 200.7,402.2 201.8,401.9 202.9,403.4 204.0,402.8 205.1,402.2 206.2,402.7 207.3,403.5 208.4,402.3 209.5,402.9 210.6,402.1 211.7,402.2 212.8,403.3 213.9,403.2 215.0,402.3 216.1,402.0 217.2,402.1 218.3,403.0 219.4,402.8 220.5,402.4 221.6,402.3 222.7,403.0 223.8,403.2 224.9,403.4 226.0,402.9 227.1,402.3 228.2,402.0 229.3,403.2 230.4,402.6 231.5,403.2 232.6,402.0 233.7,403.4 234.8,402.5 235.9,403.4 237.0,403.5 238.1,402.8 239.2,401.9 240.3,403.5 241.4,402.8 242.5,403.5 243.6,402.4 244.7,402.2 245.8,403.4 246.9,402.6 248.0,402.2 249.1,402.6 250.2,403.0 251.3,401.9 252.4,402.8 253.5,402.7 254.6,402.8 255.7,402.1 256.8,403.2 257.9,403.4 259.0,403.5 260.1,402.5 261.2,403.2 262.3,402.6 263.4,403.3 264.5,402.0 265.6,403.5 266.7,403.6 267.8,402.8 268.9,402.8 270.0,402.9 271.1,402.9 272.2,401.9 273.3,403.6 274.4,402.3 275.5,402.2 276.6,402.1 277.7,402.4 278.8,403.4 279.9,402.0 281.0,402.1 282.1,403.2 283.2,402.3 284.3,401.9 285.4,403.0 286.5,402.9 287.6,402.8 288.7,403.2 289.8,402.1 290.9,403.5 292.0,403.2 293.1,402.0 294.2,402.1 295.3,402.8 296.4,402.8 297.5,402.4 298.6,402.1 299.7,402.6 300.8,402.1 301.9,403.0 303.0,403.4 304.1,402.2 305.2,402.9 306.3,403.2 307.4,402.2 308.5,403.4 309.6,403.6 310.7,402.6 311.8,402.7 312.9,403.4 314.0,402.8 315.1,402.6 316.2,403.6 317.3,403.3 318.4,402.5 319.5,402.3 320.6,402.5 321.7,402.7 322.8,403.7 323.9,403.3 325.0,403.5 326.1,403.4 327.2,403.4 328.3,402.0 329.4,402.8 330.5,403.6 331.6,403.6 332.7,402.3 333.8,402.7 334.9,403.0 336.0,402.6 337.1,402.9 338.2,402.0 339.3,402.7 340.4,402.8 341.5,401.9 342.6,402.2 343.7,403.6 344.8,403.3 345.9,403.6 347.0,403.0 348.1,403.4 349.2,403.5 350.3,403.5 351.4,402.0 352.5,403.1 353.6,402.4 354.7,403.1 355.8,402.4 356.9,402.9 358.0,403.6 359.1,403.0 360.2,402.4 361.3,402.8 362.4,402.7 363.5,403.6 364.6,402.4 365.7,402.4 366.8,403.1 367.9,402.1 369.0,403.0 370.1,403.6 371.2,402.8 372.3,402.4 373.4,402.7 374.5,402.9 375.6,402.2 376.7,402.1 377.8,402.1 378.9,402.4 380.0,402.6 381.1,402.4 382.2,402.3 383.3,402.1 384.4,402.9 385.5,403.4 386.6,403.0 387.7,402.9 388.8,403.1 389.9,402.3 391.0,403.2 392.1,402.7 393.2,402.9 394.3,403.0 395.4,402.7 396.5,402.5 397.6,402.3 398.7,402.3 399.8,402.8 400.9,402.6 402.0,403.0 403.1,401.9 404.2,402.5 405.3,403.5 406.4,402.3 407.5,402.9 408.6,402.8 409.7,402.4 410.8,403.7 411.9,402.4 413.0,403.3 414.1,402.2 415.2,402.0 416.3,403.5 417.4,402.7 418.5,402.0 419.6,402.6 420.7,402.7 421.8,403.2 422.9,402.1 424.0,402.3 425.1,403.6 426.2,403.2 427.3,402.2 428.4,402.5 429.5,402.5 430.6,403.1 431.7,403.0 432.8,403.4 433.9,403.4 435.0,402.8 436.1,403.2 437.2,403.2 438.3,403.3 439.4,402.8 440.5,403.3 441.6,403.2 442.7,403.5 443.8,402.1 444.9,403.5 446.0,401.9 447.1,403.3 448.2,403.0 449.3,402.8 450.4,403.6 451.5,402.9 452.6,402.7 453.7,403.3 454.8,403.5 455.9,403.0 457.0,402.6 458.1,402.7 459.2,402.7 460.3,403.2 461.4,402.4 462.5,402.6 463.6,402.9 464.7,402.6 465.8,402.5 466.9,403.3 468.0,403.4 469.1,402.8 470.2,402.7 471.3,402.2 472.4,402.4 473.5,402.2 474.6,402.9 475.7,402.9 476.8,402.1 477.9,403.6 479.0,402.5 480.1,403.4 481.2,403.4 482.3,403.6 483.4,402.3 484.5,402.7 485.6,403.5 486.7,401.9 487.8,402.0 488.9,402.9 490.0,402.8 491.1,403.6 492.2,403.3 493.3,402.9 494.4,403.7 495.5,402.8 496.6,402.8 497.7,403.1 498.8,402.6 499.9,402.5 501.0,403.0 502.1,402.5 503.2,403.6 504.3,403.1 505.4,402.8 506.5,402.1 507.6,402.6 508.7,402.6 509.8,402.9 510.9,402.9 512.0,403.5 513.1,403.6 514.2,402.8 515.3,402.7 516.4,403.0 517.5,403.7 518.6,402.5 519.7,402.9 520.8,403.4 521.9,402.2 523.0,402.5 524.1,403.7 525.2,403.4 526.3,402.8 527.4,402.1 528.5,403.5 529.6,403.1 530.7,403.4 531.8,403.7 532.9,403.5 534.0,402.7 535.1,402.2 536.2,402.4 537.3,402.8 538.4,402.8 539.5,402.2 540.6,402.2 541.7,403.0 542.8,403.0 543.9,402.5 545.0,403.7 546.1,403.0 547.2,402.0 548.3,402.6 549.4,403.3 550.5,402.5 551.6,403.1 552.7,401.9 553.8,402.4 554.9,403.4 556.0,403.0 557.1,403.1 558.2,402.3 559.3,402.8 560.4,402.9 561.5,402.4 562.6,403.1 563.7,402.9 564.8,403.7 565.9,402.9 567.0,402.6 568.1,402.1 569.2,402.2 570.3,403.3 571.4,402.1 572.5,402.1 573.6,402.2 574.7,402.8 575.8,403.4 576.9,403.0 578.0,403.4 579.1,402.0 580.2,401.9 581.3,403.3 582.4,402.5 583.5,403.2 584.6,402.5 585.7,402.2 586.8,402.4 587.9,402.1 589.0,403.5 590.1,402.9 591.2,402.5 592.3,402.7 593.4,402.6 594.5,402.0 595.6,403.5 596.7,402.9 597.8,403.6 598.9,402.7 600.0,403.0 601.1,402.3 602.2,402.0 603.3,403.6 604.4,403.4 605.5,402.5 606.6,403.5 607.7,403.4 608.8,402.4 609.9,403.0 611.0,403.6 612.1,402.8 613.2,403.6 614.3,402.3 615.4,402.6 616.5,403.2 617.6,402.3 618.7,402.5 619.8,403.5 620.9,402.8 622.0,403.3 623.1,402.3 624.2,402.2 625.3,402.5 626.4,402.2 627.5,403.6 628.6,402.4 629.7,402.9 630.8,402.1 631.9,402.9 633.0,402.6 634.1,402.6 635.2,402.0 636.3,402.1 637.4,403.4 638.5,402.5 639.6,402.3 640.7,402.2 641.8,402.4 642.9,402.3 644.0,402.0 645.1,403.1 646.2,402.5 647.3,402.2 648.4,403.2 649.5,402.1 650.6,402.4 651.7,403.4 652.8,402.1 653.9,402.7 655.0,403.4 656.1,403.3 657.2,402.2 658.3,402.5 659.4,403.2 660.5,402.6 661.6,403.6 662.7,402.3 663.8,403.6 664.9,402.8 666.0,402.3 667.1,402.7 668.2,402.1 669.3,403.2 670.4,402.4 671.5,403.5 672.6,403.0 673.7,402.6 674.8,402.3 675.9,403.0 677.0,402.3 678.1,403.5 679.2,402.1 680.3,402.8 681.4,402.9 682.5,402.4 683.6,403.3 684.7,402.6 685.8,403.1 686.9,402.9 688.0,402.5 689.1,402.6 690.2,402.1 691.3,402.2 692.4,403.4 693.5,402.5 694.6,403.1 695.7,402.1 696.8,402.9 697.9,402.6 699.0,402.8 700.1,402.4 701.2,402.0 702.3,402.5 703.4,402.3 704.5,402.1 705.6,403.2 706.7,402.4 707.8,402.6 708.9,403.5 710.0,403.3 711.1,403.5 712.2,403.5 713.3,402.1 714.4,402.4 715.5,402.0 716.6,403.1 717.7,403.1 718.8,402.5 719.9,402.6 721.0,403.1 722.1,403.2 723.2,402.3 724.3,403.4 725.4,402.5 726.5,403.0 727.6,402.2 728.7,402.1 729.8,403.5 730.9,403.2 732.0,403.2 733.1,402.0 734.2,402.0 735.3,402.2 736.4,402.3 737.5,402.4 738.6,402.6 739.7,402.0 740.8,402.5 741.9,403.0 743.0,402.2 744.1,403.4 745.2,402.9 746.3,403.2 747.4,402.4 748.5,402.7 749.6,403.1 750.7,402.5 751.8,401.9 752.9,403.4 754.0,403.3 755.1,402.4 756.2,402.0 757.3,403.4 758.4,403.0 759.5,402.0 760.6,402.3 761.7,402.1 762.8,403.3 763.9,402.3 765.0,403.5 766.1,403.2 767.2,402.1 768.3,403.2 769.4,402.6 770.5,403.2 771.6,403.4 772.7,402.4 773.8,402.1 774.9,403.6 776.0,402.7 777.1,403.6 778.2,403.1 779.3,403.2 780.4,403.4 781.5,403.0 782.6,402.7 783.7,402.0 784.8,403.2 785.9,402.7 787.0,402.8 788.1,403.6 789.2,402.1 790.3,403.3 791.4,402.0 792.5,403.2" fill="none" stroke="#c75bbf" stroke-width="3.4" stroke-linejoin="round"/>
<polyline points="35.7,402.4 37.1,399.6 38.5,401.2 39.9,403.7 41.3,402.3 42.7,402.2 44.1,401.0 45.5,400.4 46.9,402.1 48.3,402.3 49.7,401.2 51.1,401.8 52.5,400.9 53.9,403.9 55.3,403.7 56.7,401.4 58.1,401.5 59.5,402.9 60.9,402.5 62.3,405.1 63.7,402.0 65.1,401.8 66.5,404.8 67.9,400.9 69.3,403.1 70.7,401.9 72.1,404.4 73.5,403.1 74.9,404.2 76.3,401.1 77.7,403.7 79.1,403.3 80.5,402.6 81.9,404.2 83.3,404.5 84.7,400.8 86.1,401.7 87.5,402.1 88.9,401.3 90.3,400.5 91.7,401.7 93.1,401.2 94.5,403.8 95.9,402.5 97.3,400.8 98.7,401.9 100.1,402.6 101.5,402.1 102.9,401.1 104.3,400.6 105.7,400.3 107.1,405.4 108.5,404.1 109.9,400.6 111.3,403.9 112.7,405.3 114.1,403.1 115.5,400.8 116.9,402.7 118.3,402.5 119.7,401.2 121.1,403.0 122.5,400.2 123.9,405.0 125.3,403.6 126.7,403.5 128.1,405.1 129.5,403.6 130.9,401.5 132.3,401.5 133.7,400.9 135.1,400.3 136.5,404.2 137.9,404.6 139.3,401.7 140.7,401.2 142.1,403.5 143.5,404.6 144.9,405.0 146.3,401.1 147.7,404.3 149.1,404.5 150.5,404.1 151.9,401.9 153.3,401.2 154.7,404.5 156.1,401.9 157.5,402.1 158.9,403.1 160.3,402.1 161.7,404.5 163.1,401.4 164.5,400.4 165.9,403.1 167.3,403.5 168.7,404.5 170.1,403.9 171.5,404.9 172.9,405.1 174.3,402.8 175.7,402.8 177.1,401.0 178.5,401.8 179.9,403.2 181.3,400.6 182.7,403.8 184.1,401.1 185.5,402.5 186.9,405.2 188.3,400.7 189.7,400.4 191.1,402.5 192.5,401.2 193.9,404.0 195.3,400.2 196.7,404.6 198.1,404.6 199.5,404.3 200.9,402.4 202.3,401.7 203.7,403.6 205.1,402.9 206.5,402.4 207.9,402.0 209.3,402.5 210.7,403.7 212.1,404.5 213.5,404.9 214.9,401.1 216.3,401.7 217.7,402.5 219.1,403.1 220.5,402.0 221.9,401.2 223.3,400.6 224.7,401.9 226.1,402.6 227.5,405.3 228.9,404.9 230.3,404.7 231.7,405.3 233.1,405.2 234.5,403.4 235.9,404.4 237.3,400.5 238.7,403.7 240.1,403.4 241.5,401.7 242.9,403.2 244.3,405.2 245.7,402.7 247.1,403.6 248.5,401.8 249.9,402.0 251.3,404.8 252.7,400.3 254.1,401.2 255.5,403.7 256.9,402.5 258.3,400.6 259.7,403.6 261.1,402.1 262.5,403.2 263.9,402.4 265.3,403.0 266.7,403.1 268.1,402.3 269.5,400.8 270.9,401.1 272.3,404.8 273.7,403.1 275.1,400.8 276.5,404.7 277.9,401.5 279.3,400.7 280.7,403.0 282.1,401.5 283.5,402.7 284.9,403.1 286.3,401.4 287.7,403.2 289.1,400.8 290.5,402.9 291.9,403.3 293.3,400.6 294.7,402.3 296.1,400.6 297.5,402.5 298.9,404.7 300.3,403.1 301.7,403.9 303.1,404.1 304.5,400.8 305.9,405.4 307.3,404.0 308.7,400.7 310.1,404.5 311.5,402.2 312.9,401.1 314.3,405.2 315.7,403.1 317.1,404.2 318.5,400.9 319.9,404.2 321.3,400.5 322.7,401.4 324.1,402.1 325.5,400.3 326.9,403.3 328.3,401.3 329.7,401.8 331.1,403.9 332.5,402.4 333.9,404.8 335.3,403.4 336.7,404.7 338.1,403.1 339.5,405.0 340.9,404.7 342.3,401.1 343.7,404.1 345.1,402.0 346.5,404.2 347.9,403.7 349.3,404.5 350.7,400.8 352.1,402.1 353.5,404.0 354.9,405.1 356.3,404.0 357.7,400.4 359.1,403.3 360.5,400.7 361.9,403.1 363.3,404.4 364.7,400.8 366.1,405.0 367.5,403.7 368.9,401.5 370.3,401.2 371.7,402.5 373.1,404.6 374.5,403.2 375.9,400.8 377.3,400.3 378.7,400.8 380.1,404.4 381.5,401.2 382.9,403.1 384.3,401.7 385.7,403.8 387.1,402.2 388.5,401.0 389.9,404.8 391.3,403.0 392.7,403.8 394.1,404.4 395.5,405.1 396.9,400.3 398.3,402.0 399.7,401.0 401.1,402.8 402.5,404.7 403.9,404.4 405.3,400.4 406.7,401.1 408.1,404.5 409.5,403.7 410.9,402.2 412.3,402.7 413.7,401.0 415.1,404.6 416.5,402.2 417.9,404.7 419.3,403.4 420.7,400.6 422.1,401.9 423.5,401.3 424.9,404.8 426.3,403.3 427.7,400.4 429.1,401.1 430.5,402.1 431.9,402.6 433.3,403.2 434.7,402.2 436.1,402.0 437.5,400.2 438.9,403.2 440.3,401.9 441.7,400.3 443.1,402.6 444.5,405.3 445.9,400.4 447.3,401.0 448.7,403.7 450.1,401.6 451.5,401.6 452.9,402.8 454.3,401.6 455.7,403.2 457.1,402.9 458.5,405.2 459.9,405.4 461.3,400.4 462.7,403.1 464.1,404.2 465.5,404.7 466.9,404.2 468.3,403.5 469.7,403.5 471.1,402.1 472.5,401.7 473.9,404.3 475.3,404.7 476.7,405.1 478.1,403.7 479.5,401.8 480.9,404.2 482.3,404.0 483.7,402.8 485.1,403.5 486.5,402.0 487.9,403.1 489.3,402.3 490.7,400.5 492.1,402.0 493.5,401.9 494.9,405.3 496.3,402.7 497.7,402.1 499.1,401.5 500.5,401.4 501.9,402.0 503.3,400.9 504.7,400.2 506.1,404.7 507.5,402.6 508.9,402.5 510.3,403.2 511.7,401.8 513.1,401.1 514.5,400.5 515.9,401.8 517.3,401.8 518.7,404.0 520.1,403.1 521.5,405.1 522.9,402.0 524.3,405.0 525.7,403.2 527.1,400.6 528.5,401.1 529.9,403.2 531.3,405.3 532.7,402.1 534.1,404.2 535.5,402.4 536.9,404.7 538.3,400.6 539.7,402.7 541.1,404.9 542.5,401.6 543.9,401.5 545.3,400.3 546.7,401.1 548.1,401.6 549.5,403.9 550.9,401.3 552.3,402.3 553.7,401.2 555.1,403.3 556.5,404.7 557.9,403.6 559.3,401.2 560.7,404.0 562.1,405.2 563.5,403.3 564.9,400.6 566.3,404.4 567.7,404.8 569.1,402.0 570.5,400.9 571.9,401.2 573.3,403.0 574.7,404.8 576.1,403.5 577.5,405.0 578.9,401.3 580.3,401.9 581.7,404.1 583.1,403.6 584.5,402.3 585.9,403.7 587.3,402.0 588.7,400.5 590.1,402.4 591.5,400.4 592.9,403.5 594.3,401.9 595.7,402.8 597.1,403.3 598.5,401.5 599.9,402.6 601.3,400.3 602.7,405.0 604.1,403.1 605.5,405.3 606.9,400.5 608.3,403.4 609.7,404.0 611.1,401.9 612.5,400.7 613.9,401.0 615.3,400.9 616.7,404.2 618.1,400.7 619.5,404.4 620.9,402.4 622.3,403.0 623.7,403.3 625.1,403.1 626.5,403.6 627.9,403.3 629.3,401.9 630.7,404.1 632.1,401.5 633.5,403.9 634.9,404.2 636.3,404.2 637.7,401.8 639.1,404.2 640.5,405.3 641.9,402.6 643.3,401.6 644.7,402.9 646.1,405.1 647.5,400.9 648.9,400.2 650.3,402.7 651.7,403.6 653.1,404.2 654.5,402.1 655.9,405.3 657.3,401.4 658.7,404.1 660.1,400.7 661.5,400.3 662.9,400.9 664.3,400.5 665.7,402.8 667.1,403.1 668.5,401.1 669.9,405.1 671.3,402.1 672.7,401.0 674.1,401.1 675.5,404.0 676.9,405.0 678.3,401.0 679.7,400.4 681.1,404.2 682.5,401.5 683.9,405.3 685.3,402.8 686.7,403.5 688.1,402.0 689.5,404.4 690.9,402.6 692.3,401.9 693.7,404.9 695.1,400.8 696.5,404.0 697.9,400.5 699.3,403.6 700.7,402.3 702.1,404.7 703.5,400.5 704.9,403.1 706.3,402.3 707.7,405.0 709.1,405.1 710.5,403.5 711.9,401.4 713.3,401.5 714.7,401.6 716.1,402.5 717.5,401.4 718.9,401.3 720.3,404.1 721.7,403.5 723.1,401.8 724.5,405.4 725.9,401.3 727.3,403.2 728.7,401.0 730.1,404.7 731.5,404.7 732.9,401.6 734.3,404.1 735.7,404.5 737.1,401.7 738.5,401.9 739.9,402.7 741.3,404.8 742.7,401.0 744.1,403.8 745.5,403.3 746.9,402.6 748.3,403.2 749.7,404.8 751.1,401.3 752.5,404.8 753.9,402.1 755.3,404.3 756.7,404.7 758.1,401.1 759.5,404.7 760.9,405.4 762.3,401.7 763.7,400.3 765.1,400.8 766.5,405.3 767.9,400.2 769.3,404.9 770.7,401.0 772.1,404.0 773.5,400.7 774.9,401.1 776.3,403.8 777.7,400.7 779.1,402.0 780.5,405.0 781.9,403.9 783.3,404.8 784.7,405.3 786.1,400.4 787.5,401.4 788.9,404.3 790.3,403.8 791.7,400.4 793.1,402.8" fill="none" stroke="#c75bbf" stroke-width="1.1" stroke-linejoin="round"/>
<line x1="67.9" y1="403" x2="67.9" y2="409.8" stroke="#c75bbf" stroke-width="1"/>
<circle cx="67.9" cy="409.8" r="1.3" fill="#c75bbf"/>
<line x1="355.3" y1="403" x2="355.3" y2="428.4" stroke="#c75bbf" stroke-width="1"/>
<circle cx="355.3" cy="428.4" r="1.3" fill="#c75bbf"/>
<line x1="358" y1="403" x2="358" y2="419.2" stroke="#c75bbf" stroke-width="1"/>
<circle cx="358" cy="419.2" r="1.3" fill="#c75bbf"/>
<line x1="360" y1="403" x2="360" y2="408.5" stroke="#c75bbf" stroke-width="1"/>
<circle cx="360" cy="408.5" r="1.3" fill="#c75bbf"/>
<line x1="367.5" y1="403" x2="367.5" y2="408.5" stroke="#c75bbf" stroke-width="1"/>
<circle cx="367.5" cy="408.5" r="1.3" fill="#c75bbf"/>
<line x1="372" y1="403" x2="372" y2="408.5" stroke="#c75bbf" stroke-width="1"/>
<circle cx="372" cy="408.5" r="1.3" fill="#c75bbf"/>
<line x1="376.5" y1="403" x2="376.5" y2="408.5" stroke="#c75bbf" stroke-width="1"/>
<circle cx="376.5" cy="408.5" r="1.3" fill="#c75bbf"/>
<line x1="567.5" y1="403" x2="567.5" y2="410" stroke="#c75bbf" stroke-width="1"/>
<circle cx="567.5" cy="410" r="1.3" fill="#c75bbf"/>
<line x1="582.5" y1="403" x2="582.5" y2="410" stroke="#c75bbf" stroke-width="1"/>
<circle cx="582.5" cy="410" r="1.3" fill="#c75bbf"/>
<line x1="639" y1="403" x2="639" y2="409.5" stroke="#c75bbf" stroke-width="1"/>
<circle cx="639" cy="409.5" r="1.3" fill="#c75bbf"/>
<line x1="676.5" y1="403" x2="676.5" y2="409.5" stroke="#c75bbf" stroke-width="1"/>
<circle cx="676.5" cy="409.5" r="1.3" fill="#c75bbf"/>
<line x1="693.5" y1="403" x2="693.5" y2="411" stroke="#c75bbf" stroke-width="1"/>
<circle cx="693.5" cy="411" r="1.3" fill="#c75bbf"/>
<circle cx="356.7" cy="470.8" r="4.6" fill="#f2a0a0" opacity="0.55"/>
<ellipse cx="356.7" cy="470.8" rx="2.6" ry="1.6" fill="#e0504a"/>
</svg>

<div class="abs" style="left:35.7px;top:528.4px;width:757.8px;height:7.6px;background:linear-gradient(180deg,#7cc2f3,#5db1f0);border-radius:1px;box-shadow:0 0 0.6px rgba(80,110,150,0.5)"></div>
<div class="abs" style="left:35.3px;top:527.2px;width:11px;height:10.4px;background:#e8e9ee;border:1px solid #c0c3cc;border-radius:2px"></div>
<div class="abs" style="left:38.7px;top:530.3px;width:0.7px;height:4.2px;background:#b4b6be"></div>
<div class="abs" style="left:40.5px;top:530.3px;width:0.7px;height:4.2px;background:#b4b6be"></div>
<div class="abs" style="left:42.3px;top:530.3px;width:0.7px;height:4.2px;background:#b4b6be"></div>
<div class="abs" style="left:782.3px;top:527.2px;width:10.8px;height:10.3px;background:#e8e9ee;border:1px solid #c0c3cc;border-radius:2px"></div>
<div class="abs" style="left:785.6px;top:530.2px;width:0.7px;height:4.2px;background:#b4b6be"></div>
<div class="abs" style="left:787.4px;top:530.2px;width:0.7px;height:4.2px;background:#b4b6be"></div>
<div class="abs" style="left:789.2px;top:530.2px;width:0.7px;height:4.2px;background:#b4b6be"></div>

<div class="lgi" style="left:231.6px;background:#c75bbf"></div>
<div class="lgs" style="left:233.79999999999998px;border-color:#c75bbf"></div>
<div class="lgt" style="left:245.3px">FPS</div>
<div class="lgi" style="left:267px;background:#72b86a"></div>
<div class="lgt" style="left:280.2px">Smooth</div>
<div class="lgi" style="left:312.8px;background:#45a9a6"></div>
<div class="lgt" style="left:326.7px">1%Low(FPS)</div>
<div class="lgi" style="left:373px;background:#5a5cf0"></div>
<div class="lgt" style="left:386.7px">SmallJank</div>
<div class="lgi" style="left:426.4px;background:#ef8a5a"></div>
<div class="lgs" style="left:428.59999999999997px;border-color:#ef8a5a"></div>
<div class="lgt" style="left:440.1px">Jank</div>
<div class="lgi" style="left:463.5px;background:#e0504a"></div>
<div class="lgs" style="left:465.7px;border-color:#e0504a"></div>
<div class="lgt" style="left:477px">BigJank</div>
<div class="lgi" style="left:510px;background:#5b8ef0"></div>
<div class="lgt" style="left:523.7px">Stutter</div>
<div class="lgi" style="left:554.1px;background:#5bc8e6"></div>
<div class="lgt" style="left:567.8px">InterFrame</div>
<div class="abs" style="left:753px;top:540.3px;font-size:6.3px;color:#4d7cf0">全隐藏</div>
<div class="abs" style="left:726px;top:551.5px;width:34px;height:6px;border:1px solid #e3e5ea;border-radius:2px;background:#fafafa"></div>

<div class="wm" style="left:31.5px;top:110.5px">PerfDog</div>
<div class="wm" style="left:239px;top:111px">PerfDog</div>
<div class="wm" style="left:447px;top:111px">PerfDog</div>
<div class="wm" style="left:32px;top:293px">PerfDog</div>
<div class="wm" style="left:238.7px;top:292.5px">PerfDog</div>
<div class="wm" style="left:448.4px;top:290.5px">PerfDog</div>
</body></html>
